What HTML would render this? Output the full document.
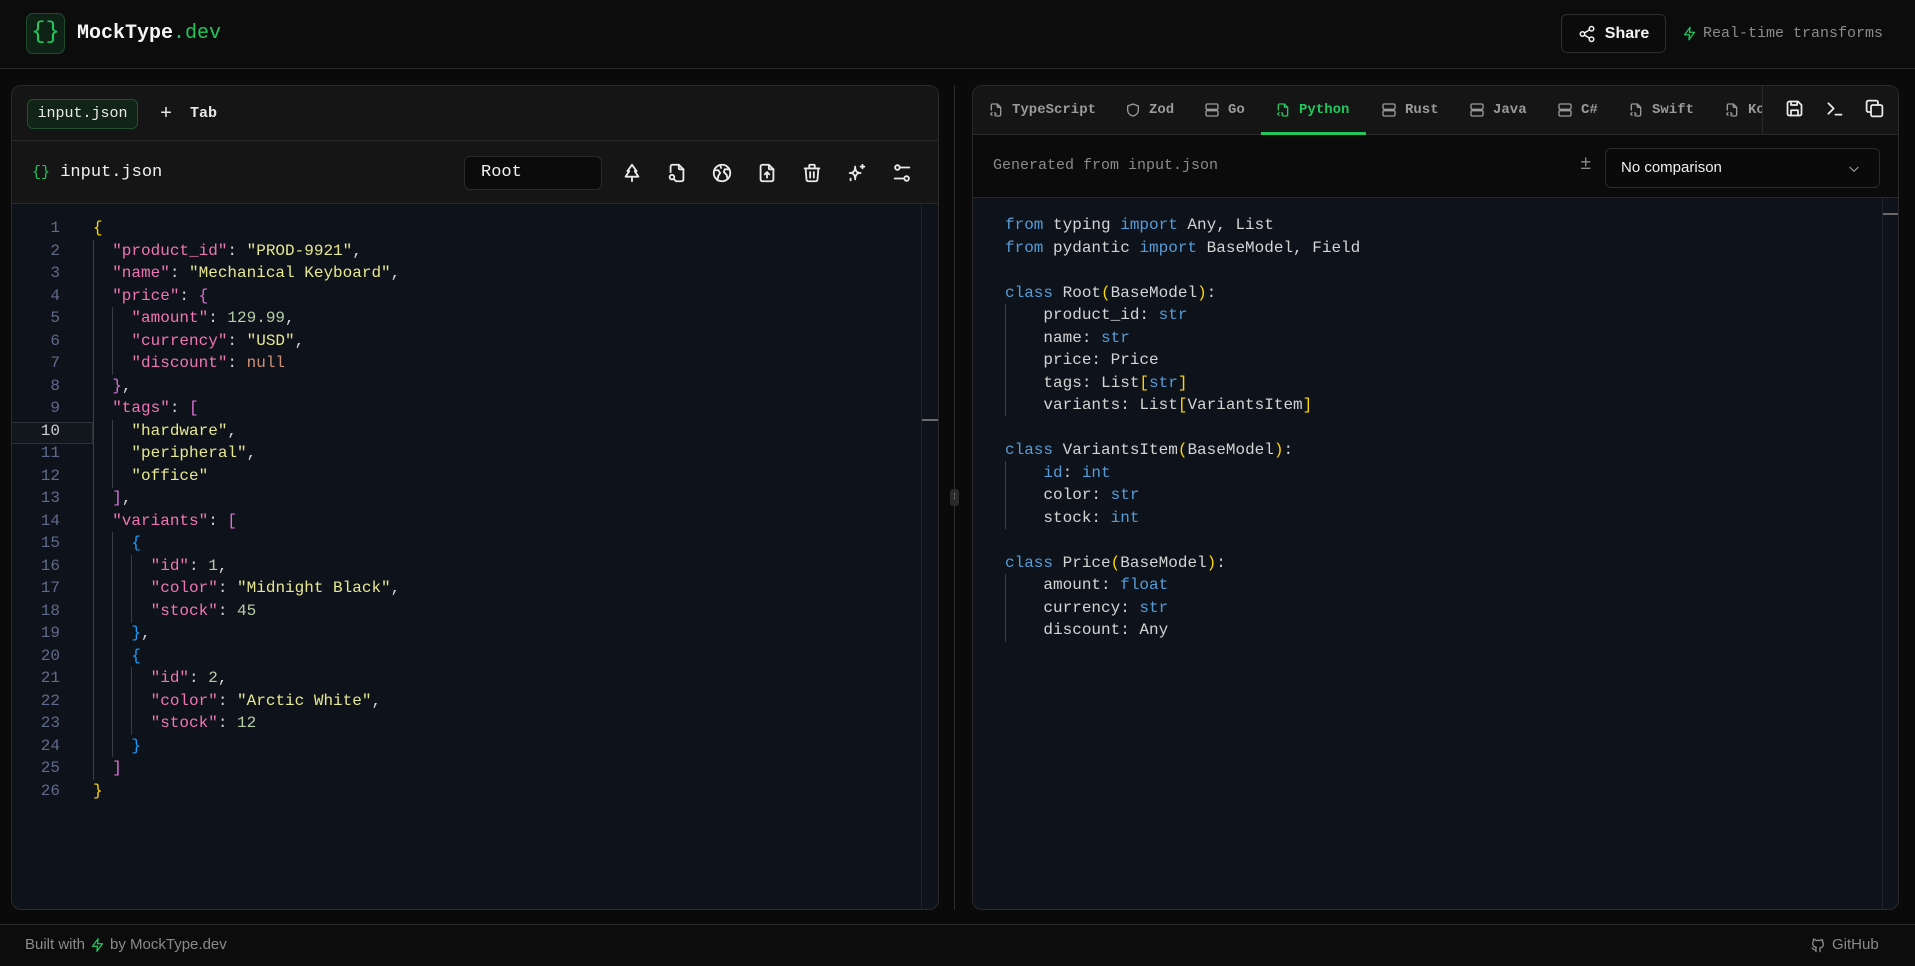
<!DOCTYPE html>
<html><head><meta charset="utf-8">
<style>
*{box-sizing:border-box;margin:0;padding:0}
body{width:1915px;height:966px;background:#0a0a0b;color:#e5e5e5;font-family:"Liberation Mono",monospace;position:relative;overflow:hidden}
.abs{position:absolute}
svg{display:block}
.ic{stroke:currentColor;fill:none;stroke-width:2;stroke-linecap:round;stroke-linejoin:round}
.code{font-family:"Liberation Mono",monospace;font-size:16px;line-height:22.5px;white-space:pre;color:#d4d4d4}
.k{color:#f075b5}.s{color:#e8e88f}.n{color:#b5cea8}.nl{color:#ce9178}
.b1{color:#ffd700}.b2{color:#da70d6}.b3{color:#179fff}
.kw{color:#569cd6}
.guide{position:absolute;width:1px;background:#3a3d44}
.tab{position:absolute;top:85px;height:49px;display:flex;align-items:center;gap:8px;font-size:14px;font-weight:bold;color:#9a9a9a}
</style></head><body>
<!-- header -->
<div class="abs" style="left:0;top:0;width:1915px;height:69px;background:#0c0c0d;border-bottom:1px solid #2a2a2a"></div>
<div class="abs" style="left:26px;top:13px;width:39px;height:41px;border:1px solid #1f4a2c;background:#0f2216;border-radius:7px;color:#22c55e;font-size:24px;line-height:38px;text-align:center">{}</div>
<div class="abs" style="left:77px;top:22px;font-size:20px;font-weight:bold;color:#f5f5f5">MockType<span style="color:#22c55e;font-weight:normal">.dev</span></div>
<div class="abs" style="left:1561px;top:14px;width:105px;height:39px;border:1px solid #2e2e2e;border-radius:6px;background:#0b0b0b;display:flex;align-items:center;justify-content:center;gap:9px;font-family:'Liberation Sans',sans-serif;font-weight:bold;font-size:16px;color:#f2f2f2">
<svg width="18" height="18" viewBox="0 0 24 24" class="ic"><circle cx="18" cy="5" r="3"/><circle cx="6" cy="12" r="3"/><circle cx="18" cy="19" r="3"/><path d="M8.6 13.5l6.8 4M15.4 6.5l-6.8 4"/></svg>Share</div>
<div class="abs" style="left:1682px;top:25px;display:flex;align-items:center;gap:6px;font-size:15px;color:#8a8a8a">
<svg width="15" height="17" viewBox="0 0 24 24" class="ic" style="color:#22c55e"><path d="M13 2L4 14h8l-1 8 9-12h-8z"/></svg>Real-time transforms</div>

<!-- left panel -->
<div class="abs" style="left:11px;top:85px;width:928px;height:825px;border:1px solid #2a2a2a;border-radius:10px;background:#0e121a;overflow:hidden">
  <div class="abs" style="left:0;top:0;width:928px;height:55px;background:#151515;border-bottom:1px solid #2a2a2a"></div>
  <div class="abs" style="left:15px;top:13px;width:111px;height:30px;border:1px solid #21502f;background:#122418;border-radius:6px;font-size:15px;color:#e8e8e8;line-height:28px;text-align:center">input.json</div>
  <div class="abs" style="left:148px;top:17px;font-size:15px;color:#e8e8e8;font-weight:bold"><span style="font-size:20px;font-weight:normal;vertical-align:-2px">+</span>&nbsp; Tab</div>
  <div class="abs" style="left:0;top:55px;width:928px;height:63px;background:#151515;border-bottom:1px solid #2a2a2a"></div>
  <div class="abs" style="left:20px;top:77px;font-size:17px;color:#f0f0f0"><span style="color:#22c55e;font-size:15px">{}</span> input.json</div>
  <div class="abs" style="left:452px;top:70px;width:138px;height:34px;border:1px solid #2a2a2a;border-radius:6px;background:#0b0b0b;font-size:17px;color:#f0f0f0;line-height:32px;padding-left:16px">Root</div>
  <div class="abs" style="left:609px;top:76px;display:flex;gap:23px;color:#eaeaea">
    <svg width="22" height="22" viewBox="0 0 24 24" class="ic"><path d="M12 3l5 7h-2l4 6H5l4-6H7z M12 16v5"/></svg>
    <svg width="22" height="22" viewBox="0 0 24 24" class="ic"><path d="M14 3v4a1 1 0 0 0 1 1h4"/><path d="M5 11V5a2 2 0 0 1 2-2h7l5 5v11a2 2 0 0 1-2 2h-5"/><circle cx="6.5" cy="16.5" r="2.5"/><path d="M8.5 18.5L11 21"/></svg>
    <svg width="22" height="22" viewBox="0 0 24 24" class="ic"><circle cx="12" cy="12" r="9"/><path d="M4 9h4l2 3-2 3-1 5M20 8h-5l-1 3 3 3 1 4M10 3.5l1 3"/></svg>
    <svg width="22" height="22" viewBox="0 0 24 24" class="ic"><path d="M14 3v4a1 1 0 0 0 1 1h4"/><path d="M17 21H7a2 2 0 0 1-2-2V5a2 2 0 0 1 2-2h7l5 5v11a2 2 0 0 1-2 2z"/><path d="M12 17v-6M9.5 13.5L12 11l2.5 2.5"/></svg>
    <svg width="22" height="22" viewBox="0 0 24 24" class="ic"><path d="M4 7h16M10 11v6M14 11v6M5 7l1 12a2 2 0 0 0 2 2h8a2 2 0 0 0 2-2l1-12M9 7V4a1 1 0 0 1 1-1h4a1 1 0 0 1 1 1v3"/></svg>
    <svg width="22" height="22" viewBox="0 0 24 24" class="ic"><path d="M10 5c0 5-2 7-6 7 4 0 6 2 6 7 0-5 2-7 6-7-4 0-6-2-6-7zM18 3v4M16 5h4M5 18v2"/></svg>
    <svg width="22" height="22" viewBox="0 0 24 24" class="ic"><circle cx="7" cy="6" r="2.5"/><path d="M9.5 6H20M4 18h10.5"/><circle cx="17" cy="18" r="2.5"/></svg>
  </div>
  <div class="abs" style="left:-1px;top:336px;width:82px;height:22px;border:1px solid #2e3138;background:#12161d"></div>
  <div class="abs code" style="left:0;top:131px;width:48px;text-align:right;color:#5f6b8c">1
2
3
4
5
6
7
8
9
<span style="color:#d0d0d0">10</span>
11
12
13
14
15
16
17
18
19
20
21
22
23
24
25
26</div>
  <div class="guide" style="left:81px;top:154px;height:540px"></div>
  <div class="guide" style="left:100px;top:221px;height:68px"></div>
  <div class="guide" style="left:100px;top:334px;height:68px"></div>
  <div class="guide" style="left:100px;top:446px;height:225px"></div>
  <div class="guide" style="left:119px;top:469px;height:68px"></div>
  <div class="guide" style="left:119px;top:581px;height:68px"></div>
  <div class="abs code" style="left:81px;top:131px"><span class="b1">{</span>
  <span class="k">"product_id"</span>: <span class="s">"PROD-9921"</span>,
  <span class="k">"name"</span>: <span class="s">"Mechanical Keyboard"</span>,
  <span class="k">"price"</span>: <span class="b2">{</span>
    <span class="k">"amount"</span>: <span class="n">129.99</span>,
    <span class="k">"currency"</span>: <span class="s">"USD"</span>,
    <span class="k">"discount"</span>: <span class="nl">null</span>
  <span class="b2">}</span>,
  <span class="k">"tags"</span>: <span class="b2">[</span>
    <span class="s">"hardware"</span>,
    <span class="s">"peripheral"</span>,
    <span class="s">"office"</span>
  <span class="b2">]</span>,
  <span class="k">"variants"</span>: <span class="b2">[</span>
    <span class="b3">{</span>
      <span class="k">"id"</span>: <span class="n">1</span>,
      <span class="k">"color"</span>: <span class="s">"Midnight Black"</span>,
      <span class="k">"stock"</span>: <span class="n">45</span>
    <span class="b3">}</span>,
    <span class="b3">{</span>
      <span class="k">"id"</span>: <span class="n">2</span>,
      <span class="k">"color"</span>: <span class="s">"Arctic White"</span>,
      <span class="k">"stock"</span>: <span class="n">12</span>
    <span class="b3">}</span>
  <span class="b2">]</span>
<span class="b1">}</span></div>
  <div class="abs" style="left:909px;top:118px;width:1px;height:707px;background:#1f232b"></div>
  <div class="abs" style="left:910px;top:333px;width:16px;height:2px;background:#6a6a6a"></div>
</div>

<!-- divider -->
<div class="abs" style="left:954px;top:85px;width:1px;height:825px;background:#2e2e2e"></div>
<div class="abs" style="left:950px;top:489px;width:9px;height:17px;border-radius:3px;background:#2a2a2a;color:#aaa;font-size:8px;line-height:17px;text-align:center">⁞</div>

<!-- right panel -->
<div class="abs" style="left:972px;top:85px;width:927px;height:825px;border:1px solid #2a2a2a;border-radius:10px;background:#0e121a;overflow:hidden">
  <div class="abs" style="left:0;top:0;width:927px;height:49px;background:#151515;border-bottom:1px solid #2a2a2a"></div>
  <div class="abs" style="left:0;top:49px;width:927px;height:63px;background:#0b0b0c;border-bottom:1px solid #2a2a2a"></div>
  <div class="abs" style="left:288px;top:46px;width:105px;height:3px;background:#22c55e"></div>
  <div class="abs" style="left:789px;top:0;width:1px;height:49px;background:#2a2a2a"></div>
  <div class="abs" style="left:20px;top:71px;font-size:15px;color:#8a8a8a">Generated from input.json</div>
  <div class="abs" style="left:607px;top:67px;font-size:19px;color:#8a8a8a">±</div>
  <div class="abs" style="left:632px;top:62px;width:275px;height:40px;border:1px solid #2a2a2a;border-radius:6px;background:#0a0a0a;font-family:'Liberation Sans',sans-serif;font-size:15px;color:#f0f0f0;line-height:38px;padding-left:15px">No comparison<svg class="ic abs" style="right:18px;top:13px;color:#999" width="14" height="14" viewBox="0 0 24 24"><path d="M5 9l7 7 7-7"/></svg></div>
  <div class="abs" style="left:790px;top:11px;width:137px;height:28px;background:#151515"></div>
  <div class="abs" style="left:811px;top:12px;display:flex;gap:19px;color:#eaeaea">
    <svg width="21" height="21" viewBox="0 0 24 24" class="ic"><path d="M6 4h10l4 4v10a2 2 0 0 1-2 2H6a2 2 0 0 1-2-2V6a2 2 0 0 1 2-2z"/><path d="M8 4v4h7V4M8 20v-6h8v6"/></svg>
    <svg width="21" height="21" viewBox="0 0 24 24" class="ic"><path d="M5 6l6 6-6 6M13 19h7"/></svg>
    <svg width="21" height="21" viewBox="0 0 24 24" class="ic"><rect x="8" y="8" width="13" height="13" rx="2"/><path d="M16 8V5a2 2 0 0 0-2-2H5a2 2 0 0 0-2 2v9a2 2 0 0 0 2 2h3"/></svg>
  </div>
  <div class="abs code" style="left:32px;top:128px"><span class="kw">from</span> typing <span class="kw">import</span> Any, List
<span class="kw">from</span> pydantic <span class="kw">import</span> BaseModel, Field

<span class="kw">class</span> Root<span class="b1">(</span>BaseModel<span class="b1">)</span>:
    product_id: <span class="kw">str</span>
    name: <span class="kw">str</span>
    price: Price
    tags: List<span class="b1">[</span><span class="kw">str</span><span class="b1">]</span>
    variants: List<span class="b1">[</span>VariantsItem<span class="b1">]</span>

<span class="kw">class</span> VariantsItem<span class="b1">(</span>BaseModel<span class="b1">)</span>:
    <span class="kw">id</span>: <span class="kw">int</span>
    color: <span class="kw">str</span>
    stock: <span class="kw">int</span>

<span class="kw">class</span> Price<span class="b1">(</span>BaseModel<span class="b1">)</span>:
    amount: <span class="kw">float</span>
    currency: <span class="kw">str</span>
    discount: Any</div>
  <div class="guide" style="left:32px;top:218px;height:112px"></div>
  <div class="guide" style="left:32px;top:375px;height:68px"></div>
  <div class="guide" style="left:32px;top:488px;height:68px"></div>
  <div class="abs" style="left:909px;top:112px;width:1px;height:713px;background:#1f232b"></div>
  <div class="abs" style="left:910px;top:127px;width:16px;height:2px;background:#6a6a6a"></div>
</div>
<!-- right tabs -->
<div class="tab" style="left:988px"><svg width="16" height="18" viewBox="0 0 24 24" class="ic"><path d="M14 3v4a1 1 0 0 0 1 1h4M5 12V5a2 2 0 0 1 2-2h7l5 5v11a2 2 0 0 1-2 2h-5M6 16l-2 2 2 2M10 16l2 2-2 2"/></svg>TypeScript</div>
<div class="tab" style="left:1125px"><svg width="16" height="18" viewBox="0 0 24 24" class="ic"><path d="M12 3l8 3v6c0 5-4 8-8 9-4-1-8-4-8-9V6z"/></svg>Zod</div>
<div class="tab" style="left:1204px"><svg width="16" height="18" viewBox="0 0 24 24" class="ic"><rect x="3" y="3" width="18" height="8" rx="2"/><rect x="3" y="13" width="18" height="8" rx="2"/></svg>Go</div>
<div class="tab" style="left:1275px;color:#22c55e"><svg width="16" height="18" viewBox="0 0 24 24" class="ic"><path d="M14 3v4a1 1 0 0 0 1 1h4M5 12V5a2 2 0 0 1 2-2h7l5 5v11a2 2 0 0 1-2 2h-5M6 16l-2 2 2 2M10 16l2 2-2 2"/></svg>Python</div>
<div class="tab" style="left:1381px"><svg width="16" height="18" viewBox="0 0 24 24" class="ic"><rect x="3" y="3" width="18" height="8" rx="2"/><rect x="3" y="13" width="18" height="8" rx="2"/></svg>Rust</div>
<div class="tab" style="left:1469px"><svg width="16" height="18" viewBox="0 0 24 24" class="ic"><rect x="3" y="3" width="18" height="8" rx="2"/><rect x="3" y="13" width="18" height="8" rx="2"/></svg>Java</div>
<div class="tab" style="left:1557px"><svg width="16" height="18" viewBox="0 0 24 24" class="ic"><rect x="3" y="3" width="18" height="8" rx="2"/><rect x="3" y="13" width="18" height="8" rx="2"/></svg>C#</div>
<div class="tab" style="left:1628px"><svg width="16" height="18" viewBox="0 0 24 24" class="ic"><path d="M14 3v4a1 1 0 0 0 1 1h4M5 12V5a2 2 0 0 1 2-2h7l5 5v11a2 2 0 0 1-2 2h-5M6 16l-2 2 2 2M10 16l2 2-2 2"/></svg>Swift</div>
<div class="abs" style="left:1724px;top:85px;width:38px;height:49px;overflow:hidden"><div class="tab" style="left:0;top:0;white-space:nowrap"><svg width="16" height="18" viewBox="0 0 24 24" class="ic"><path d="M14 3v4a1 1 0 0 0 1 1h4M5 12V5a2 2 0 0 1 2-2h7l5 5v11a2 2 0 0 1-2 2h-5M6 16l-2 2 2 2M10 16l2 2-2 2"/></svg>Kotlin</div></div>

<!-- footer -->
<div class="abs" style="left:0;top:924px;width:1915px;height:42px;background:#0c0c0d;border-top:1px solid #2a2a2a"></div>
<div class="abs" style="left:25px;top:936px;font-family:'Liberation Sans',sans-serif;font-size:15px;color:#8a8a8a;display:flex;align-items:center;gap:5px">Built with <svg width="15" height="16" viewBox="0 0 24 24" class="ic" style="color:#22c55e"><path d="M13 2L4 14h8l-1 8 9-12h-8z"/></svg> by MockType.dev</div>
<div class="abs" style="left:1810px;top:936px;font-family:'Liberation Sans',sans-serif;font-size:15px;color:#8a8a8a;display:flex;align-items:center;gap:6px"><svg width="16" height="16" viewBox="0 0 24 24" class="ic"><path d="M9 19c-4 1.5-4-2-6-2.5M15 22v-3.5c0-1 .1-1.4-.5-2 2.8-.3 5.5-1.4 5.5-6a4.6 4.6 0 0 0-1.3-3.2 4.2 4.2 0 0 0-.1-3.2s-1.1-.3-3.5 1.3a12 12 0 0 0-6.2 0C6.5 2.8 5.4 3.1 5.4 3.1a4.2 4.2 0 0 0-.1 3.2A4.6 4.6 0 0 0 4 9.5c0 4.6 2.7 5.7 5.5 6-.6.6-.6 1.2-.5 2V22"/></svg>GitHub</div>
</body></html>
